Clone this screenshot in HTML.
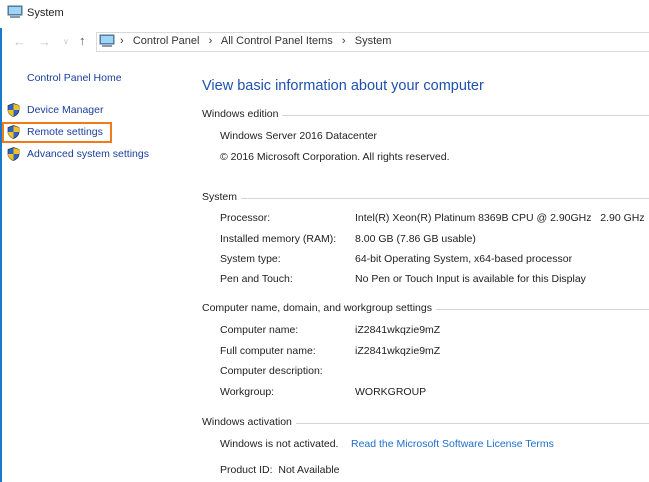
<!DOCTYPE html>
<html><head><meta charset="utf-8"><style>
body{margin:0;width:649px;height:482px;background:#fff;position:relative;overflow:hidden;font-family:"Liberation Sans",sans-serif;font-size:10.5px;color:#1e1e1e}
.a{position:absolute;white-space:nowrap;line-height:13px}
.l{color:#1a3e9c}
.h{position:absolute;left:202px;right:0;height:13px;line-height:13px;display:flex;align-items:center}
.h span{padding-right:4px}
.h i{flex:1;border-top:1px solid #d4d4d4;margin-top:1px}
.sh{position:absolute;width:13px;height:14px}
</style></head><body>
<div style="position:absolute;left:0;top:28px;width:2px;height:454px;background:#1979ca"></div>
<svg class="a" style="left:7px;top:5px" width="16" height="15"><rect x="1" y="1" width="14" height="9" fill="#3a9ae0" stroke="#5a6a7a"/><rect x="2" y="2" width="12" height="7" fill="#9fd4f6"/><rect x="3" y="11" width="10" height="2" fill="#8a9aaa"/></svg>
<div class="a" style="left:27px;top:7px;font-size:11px">System</div>
<div class="a" style="left:13px;top:35px;color:#c8c8c8;font-size:13px">←</div>
<div class="a" style="left:38px;top:35px;color:#c8c8c8;font-size:13px">→</div>
<div class="a" style="left:63px;top:35px;color:#c8c8c8;font-size:8px">∨</div>
<div class="a" style="left:79px;top:34px;color:#555;font-size:13px;font-weight:bold">↑</div>
<div style="position:absolute;left:96px;top:32px;width:560px;height:18px;border:1px solid #d9d9d9"></div>
<svg class="a" style="left:99px;top:34px" width="16" height="15"><rect x="1" y="1" width="14" height="9" fill="#3a9ae0" stroke="#5a6a7a"/><rect x="2" y="2" width="12" height="7" fill="#9fd4f6"/><rect x="3" y="11" width="10" height="2" fill="#8a9aaa"/></svg>
<div class="a" style="left:120px;top:35px;font-size:11px;color:#333">›&nbsp;&nbsp; Control Panel &nbsp;&nbsp;›&nbsp;&nbsp; All Control Panel Items &nbsp;&nbsp;›&nbsp;&nbsp; System</div>
<div class="a l" style="left:27px;top:72px">Control Panel Home</div>
<svg class="sh" style="left:7px;top:103px" viewBox="0 0 13 14"><path d="M6.5 0.5L12 2.5V7C12 10 9.5 12.5 6.5 13.5 3.5 12.5 1 10 1 7V2.5Z" fill="#2c64c8" stroke="#333" stroke-width=".7"/><path d="M6.5 1V7H12V2.5Z M6.5 7V13.3C3.5 12.3 1 10 1 7Z" fill="#f4c020"/></svg>
<div class="a l" style="left:27px;top:104px">Device Manager</div>
<div style="position:absolute;left:2px;top:122px;width:106px;height:17px;border:2px solid #f07b1a"></div>
<svg class="sh" style="left:7px;top:125px" viewBox="0 0 13 14"><path d="M6.5 0.5L12 2.5V7C12 10 9.5 12.5 6.5 13.5 3.5 12.5 1 10 1 7V2.5Z" fill="#2c64c8" stroke="#333" stroke-width=".7"/><path d="M6.5 1V7H12V2.5Z M6.5 7V13.3C3.5 12.3 1 10 1 7Z" fill="#f4c020"/></svg>
<div class="a l" style="left:27px;top:126px">Remote settings</div>
<svg class="sh" style="left:7px;top:147px" viewBox="0 0 13 14"><path d="M6.5 0.5L12 2.5V7C12 10 9.5 12.5 6.5 13.5 3.5 12.5 1 10 1 7V2.5Z" fill="#2c64c8" stroke="#333" stroke-width=".7"/><path d="M6.5 1V7H12V2.5Z M6.5 7V13.3C3.5 12.3 1 10 1 7Z" fill="#f4c020"/></svg>
<div class="a l" style="left:27px;top:148px">Advanced system settings</div>
<div class="a" style="left:202px;top:78px;font-size:14.5px;line-height:17px;color:#1e50b0">View basic information about your computer</div>
<div class="h" style="top:108px"><span>Windows edition</span><i></i></div>
<div class="a" style="left:220px;top:130px">Windows Server 2016 Datacenter</div>
<div class="a" style="left:220px;top:151px">© 2016 Microsoft Corporation. All rights reserved.</div>
<div class="h" style="top:191px"><span>System</span><i></i></div>
<div class="a" style="left:220px;top:212px">Processor:</div><div class="a" style="left:355px;top:212px">Intel(R) Xeon(R) Platinum 8369B CPU @ 2.90GHz &nbsp;&nbsp;2.90 GHz</div>
<div class="a" style="left:220px;top:233px">Installed memory (RAM):</div><div class="a" style="left:355px;top:233px">8.00 GB (7.86 GB usable)</div>
<div class="a" style="left:220px;top:253px">System type:</div><div class="a" style="left:355px;top:253px">64-bit Operating System, x64-based processor</div>
<div class="a" style="left:220px;top:273px">Pen and Touch:</div><div class="a" style="left:355px;top:273px">No Pen or Touch Input is available for this Display</div>
<div class="h" style="top:302px"><span>Computer name, domain, and workgroup settings</span><i></i></div>
<div class="a" style="left:220px;top:324px">Computer name:</div><div class="a" style="left:355px;top:324px">iZ2841wkqzie9mZ</div>
<div class="a" style="left:220px;top:345px">Full computer name:</div><div class="a" style="left:355px;top:345px">iZ2841wkqzie9mZ</div>
<div class="a" style="left:220px;top:365px">Computer description:</div>
<div class="a" style="left:220px;top:386px">Workgroup:</div><div class="a" style="left:355px;top:386px">WORKGROUP</div>
<div class="h" style="top:416px"><span>Windows activation</span><i></i></div>
<div class="a" style="left:220px;top:438px">Windows is not activated.</div><div class="a" style="left:351px;top:438px;color:#1e6ed0">Read the Microsoft Software License Terms</div>
<div class="a" style="left:220px;top:464px">Product ID:&nbsp; Not Available</div>
</body></html>
